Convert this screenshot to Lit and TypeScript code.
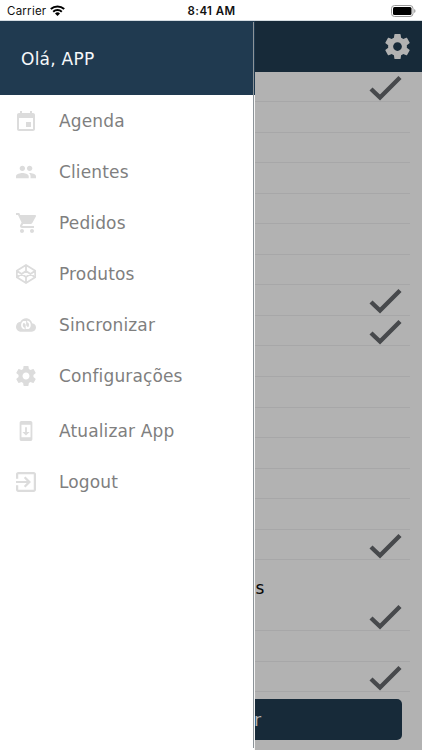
import { LitElement, html, css, svg } from "lit";
import { customElement } from "lit/decorators.js";

const GEAR = svg`<path d="M19.43 12.98c.04-.32.07-.64.07-.98s-.03-.66-.07-.98l2.11-1.65c.19-.15.24-.42.12-.64l-2-3.46c-.12-.22-.39-.3-.61-.22l-2.49 1c-.52-.4-1.08-.73-1.69-.98l-.38-2.65C14.46 2.18 14.25 2 14 2h-4c-.25 0-.46.18-.49.42l-.38 2.65c-.61.25-1.17.59-1.69.98l-2.49-1c-.23-.09-.49 0-.61.22l-2 3.46c-.13.22-.07.49.12.64l2.11 1.65c-.04.32-.07.65-.07.98s.03.66.07.98l-2.11 1.65c-.19.15-.24.42-.12.64l2 3.46c.12.22.39.3.61.22l2.49-1c.52.4 1.08.73 1.69.98l.38 2.65c.03.24.24.42.49.42h4c.25 0 .46-.18.49-.42l.38-2.65c.61-.25 1.17-.59 1.69-.98l2.49 1c.23.09.49 0 .61-.22l2-3.46c.12-.22.07-.49-.12-.64l-2.11-1.65zM12 15.5c-1.93 0-3.5-1.57-3.5-3.5s1.57-3.5 3.5-3.5 3.5 1.57 3.5 3.5-1.57 3.5-3.5 3.5z"/>`;

const MENU = [
  { label: "Agenda", box: "2 1 20 20", icon: svg`<path d="M17 12h-5v5h5v-5zM16 1v2H8V1H6v2H5c-1.11 0-1.99.9-1.99 2L3 19c0 1.1.89 2 2 2h14c1.1 0 2-.9 2-2V5c0-1.1-.9-2-2-2h-1V1h-2zm3 18H5V8h14v11z"/>` },
  { label: "Clientes", box: "1 1 22 22", icon: svg`<path d="M16 11c1.66 0 2.99-1.34 2.99-3S17.66 5 16 5s-3 1.34-3 3 1.34 3 3 3zm-8 0c1.66 0 2.99-1.34 2.99-3S9.66 5 8 5 5 6.34 5 8s1.34 3 3 3zm0 2c-2.33 0-7 1.17-7 3.5V19h14v-2.5c0-2.33-4.67-3.5-7-3.5zm8 0c-.29 0-.62.02-.97.05 1.16.84 1.97 1.97 1.97 3.45V19h6v-2.5c0-2.33-4.67-3.5-7-3.5z"/>` },
  { label: "Pedidos", box: "1 2 20 20", icon: svg`<path d="M7 18c-1.1 0-1.99.9-1.99 2S5.9 22 7 22s2-.9 2-2-.9-2-2-2zM1 2v2h2l3.6 7.590-1.350 2.450c-.16.28-.25.61-.25.96 0 1.100.9 2 2 2h12v-2H7.420c-.14 0-.25-.11-.25-.25l.03-.12.9-1.630h7.450c.75 0 1.410-.41 1.750-1.030l3.580-6.490c.08-.14.12-.31.12-.48 0-.55-.45-1-1-1H5.210l-.94-2H1zm16 16c-1.100 0-1.990.9-1.990 2s.89 2 1.990 2 2-.9 2-2-.9-2-2-2z"/>` },
  { label: "Produtos", box: "0 0 20 20", icon: svg`<path class="wire" d="M10 .9 19.200 6.700V13.300L10 19.100.8 13.300V6.700ZM10 .9V7M10 13V19.100M.8 6.700 10 13 19.200 6.700M.8 13.300 10 7 19.200 13.300"/>` },
  { label: "Sincronizar", box: "0 0 24 24", icon: svg`<path d="M19.350 10.040C18.670 6.590 15.640 4 12 4 9.110 4 6.600 5.640 5.350 8.040 2.340 8.360 0 10.910 0 14c0 3.310 2.690 6 6 6h13c2.760 0 5-2.240 5-5 0-2.640-2.050-4.780-4.650-4.960z"/><path class="cut" d="M10.300 16.500C6.200 15.200 6 9.600 9.700 8M13.500 7.400C17.600 8.800 17.700 14.400 14.200 15.900"/><path class="hole" d="M7.800 7.200h4.400v5.200zM16 16.800h-4.400v-5.200z"/>` },
  { label: "Configurações", box: "2 2 20 20", icon: GEAR },
  { label: "Atualizar App", box: "1 1 22 22", icon: svg`<path d="M17 1.010L7 1c-1.100 0-2 .9-2 2v18c0 1.100.9 2 2 2h10c1.100 0 2-.9 2-2V3c0-1.100-.9-1.990-2-1.990zM17 19H7V5h10v14zm-1-6h-3V8h-2v5H8l4 4 4-4z"/>` },
  { label: "Logout", box: "3 3 18 18", icon: svg`<path d="M10.090 15.590L11.500 17l5-5-5-5-1.410 1.410L12.670 11H3v2h9.670l-2.580 2.590zM19 3H5c-1.110 0-2 .9-2 2v4h2V5h14v14H5v-4H3v4c0 1.100.89 2 2 2h14c1.100 0 2-.9 2-2V5c0-1.100-.9-2-2-2z"/>` },
];

const FIRST_ROWS = Array.from({ length: 16 }, (_, i) => [0, 7, 8, 15].includes(i));
const LAST_ROWS = [true, false, true];

@customElement("app-root")
export class AppRoot extends LitElement {
  static styles = css`
    :host { display: block; position: relative; width: 422px; height: 750px; overflow: hidden; background: #b2b2b2; font-family: "DejaVu Sans", Verdana, sans-serif; }
    * { box-sizing: border-box; }
    svg { display: block; }
    .status { display: grid; grid-template-columns: 1fr auto 1fr; align-items: center; height: 21px; padding: 1px 6px 0 7px; background: #fff; color: #111; font: 11.5px "Inter", "Liberation Sans", sans-serif; border-bottom: 1px solid #d5dde2; }
    .carrier { display: flex; align-items: center; gap: 4px; letter-spacing: .25px; }
    .time { font-weight: 600; letter-spacing: .4px; }
    .battery { justify-self: end; }
    .topbar { display: flex; align-items: center; justify-content: flex-end; height: 50.500px; padding-right: 12px; background: #172a39; }
    .topbar svg { fill: #b2b2b2; }
    .row { display: flex; justify-content: flex-end; height: 30.550px; margin-right: 12px; padding: 3px 8.500px 0 0; border-bottom: 1px solid #a7a7a8; }
    .tick { fill: none; stroke: #47494c; stroke-width: 4.400; }
    .section { height: 40.500px; padding: 17px 0 0 255.500px; font-size: 17px; line-height: 22px; color: #080808; }
    .action { display: flex; align-items: center; height: 41px; margin: 6.500px 20.500px 0 20px; padding: 2px 0 0 234px; border-radius: 5px; background: #172a39; color: #b2b2b2; font-size: 17.500px; }
    .drawer { position: absolute; left: 0; top: 21px; width: 255px; height: 729px; background: #fff; border-right: 1px solid #f4f4f4; }
    .drawer::after { content: ""; position: absolute; top: 1px; right: 0; width: 1px; height: 726px; background: #8d9499; }
    .hello { display: flex; align-items: center; height: 74px; margin-right: -1px; padding: 2px 0 0 21px; background: #203a50; color: #f6f8fa; font-size: 17px; letter-spacing: .25px; }
    .menu { display: flex; flex-direction: column; margin: 0; padding: 1px 0 0; list-style: none; }
    .item { display: flex; align-items: center; gap: 23px; height: 50.900px; padding-left: 16px; color: #7f7f7f; font-size: 17px; letter-spacing: .14px; }
    .item:nth-child(7) { margin-top: 4px; }
    .item svg { fill: #dcdcdc; }
    .wire { fill: none; stroke: #dcdcdc; stroke-width: 1.800; stroke-linejoin: round; }
    .cut { fill: none; stroke: #fff; stroke-width: 2; }
    .hole { fill: #fff; }
  `;

  private row(done: boolean) {
    return html`<div class="row">${done ? html`<svg width="33" height="26" viewBox="0 0 33 26"><path class="tick" d="M2 14 11 22.500 31 2.500"/></svg>` : ""}</div>`;
  }

  render() {
    return html`
      <div class="status">
        <div class="carrier"><span>Carrier</span>
          <svg width="15" height="11" viewBox="0 0 15 11"><path d="M7.500 11 5 8.400a3.700 3.700 0 0 1 5 0z"/><path fill="none" stroke="#000" stroke-width="2" d="M3.200 6.700a6.300 6.300 0 0 1 8.600 0M.8 4.100a9.800 9.800 0 0 1 13.400 0"/></svg>
        </div>
        <div class="time">8:41 AM</div>
        <svg class="battery" width="25" height="12" viewBox="0 0 25 12"><rect x=".5" y=".5" width="21.500" height="11" rx="3" fill="none" stroke="#999"/><rect x="2" y="2" width="18.500" height="8" rx="1.500"/><path d="M23.200 4v4q1.300-.5 1.300-2t-1.300-2" fill="#999"/></svg>
      </div>
      <div class="topbar"><svg width="25" height="25" viewBox="2 2 20 20">${GEAR}</svg></div>
      ${FIRST_ROWS.map((d) => this.row(d))}
      <div class="section">s</div>
      ${LAST_ROWS.map((d) => this.row(d))}
      <div class="action">r</div>
      <nav class="drawer">
        <div class="hello">Olá, APP</div>
        <ul class="menu">
          ${MENU.map((m) => html`<li class="item"><svg width="20" height="20" viewBox=${m.box}>${m.icon}</svg><span>${m.label}</span></li>`)}
        </ul>
      </nav>
    `;
  }
}
